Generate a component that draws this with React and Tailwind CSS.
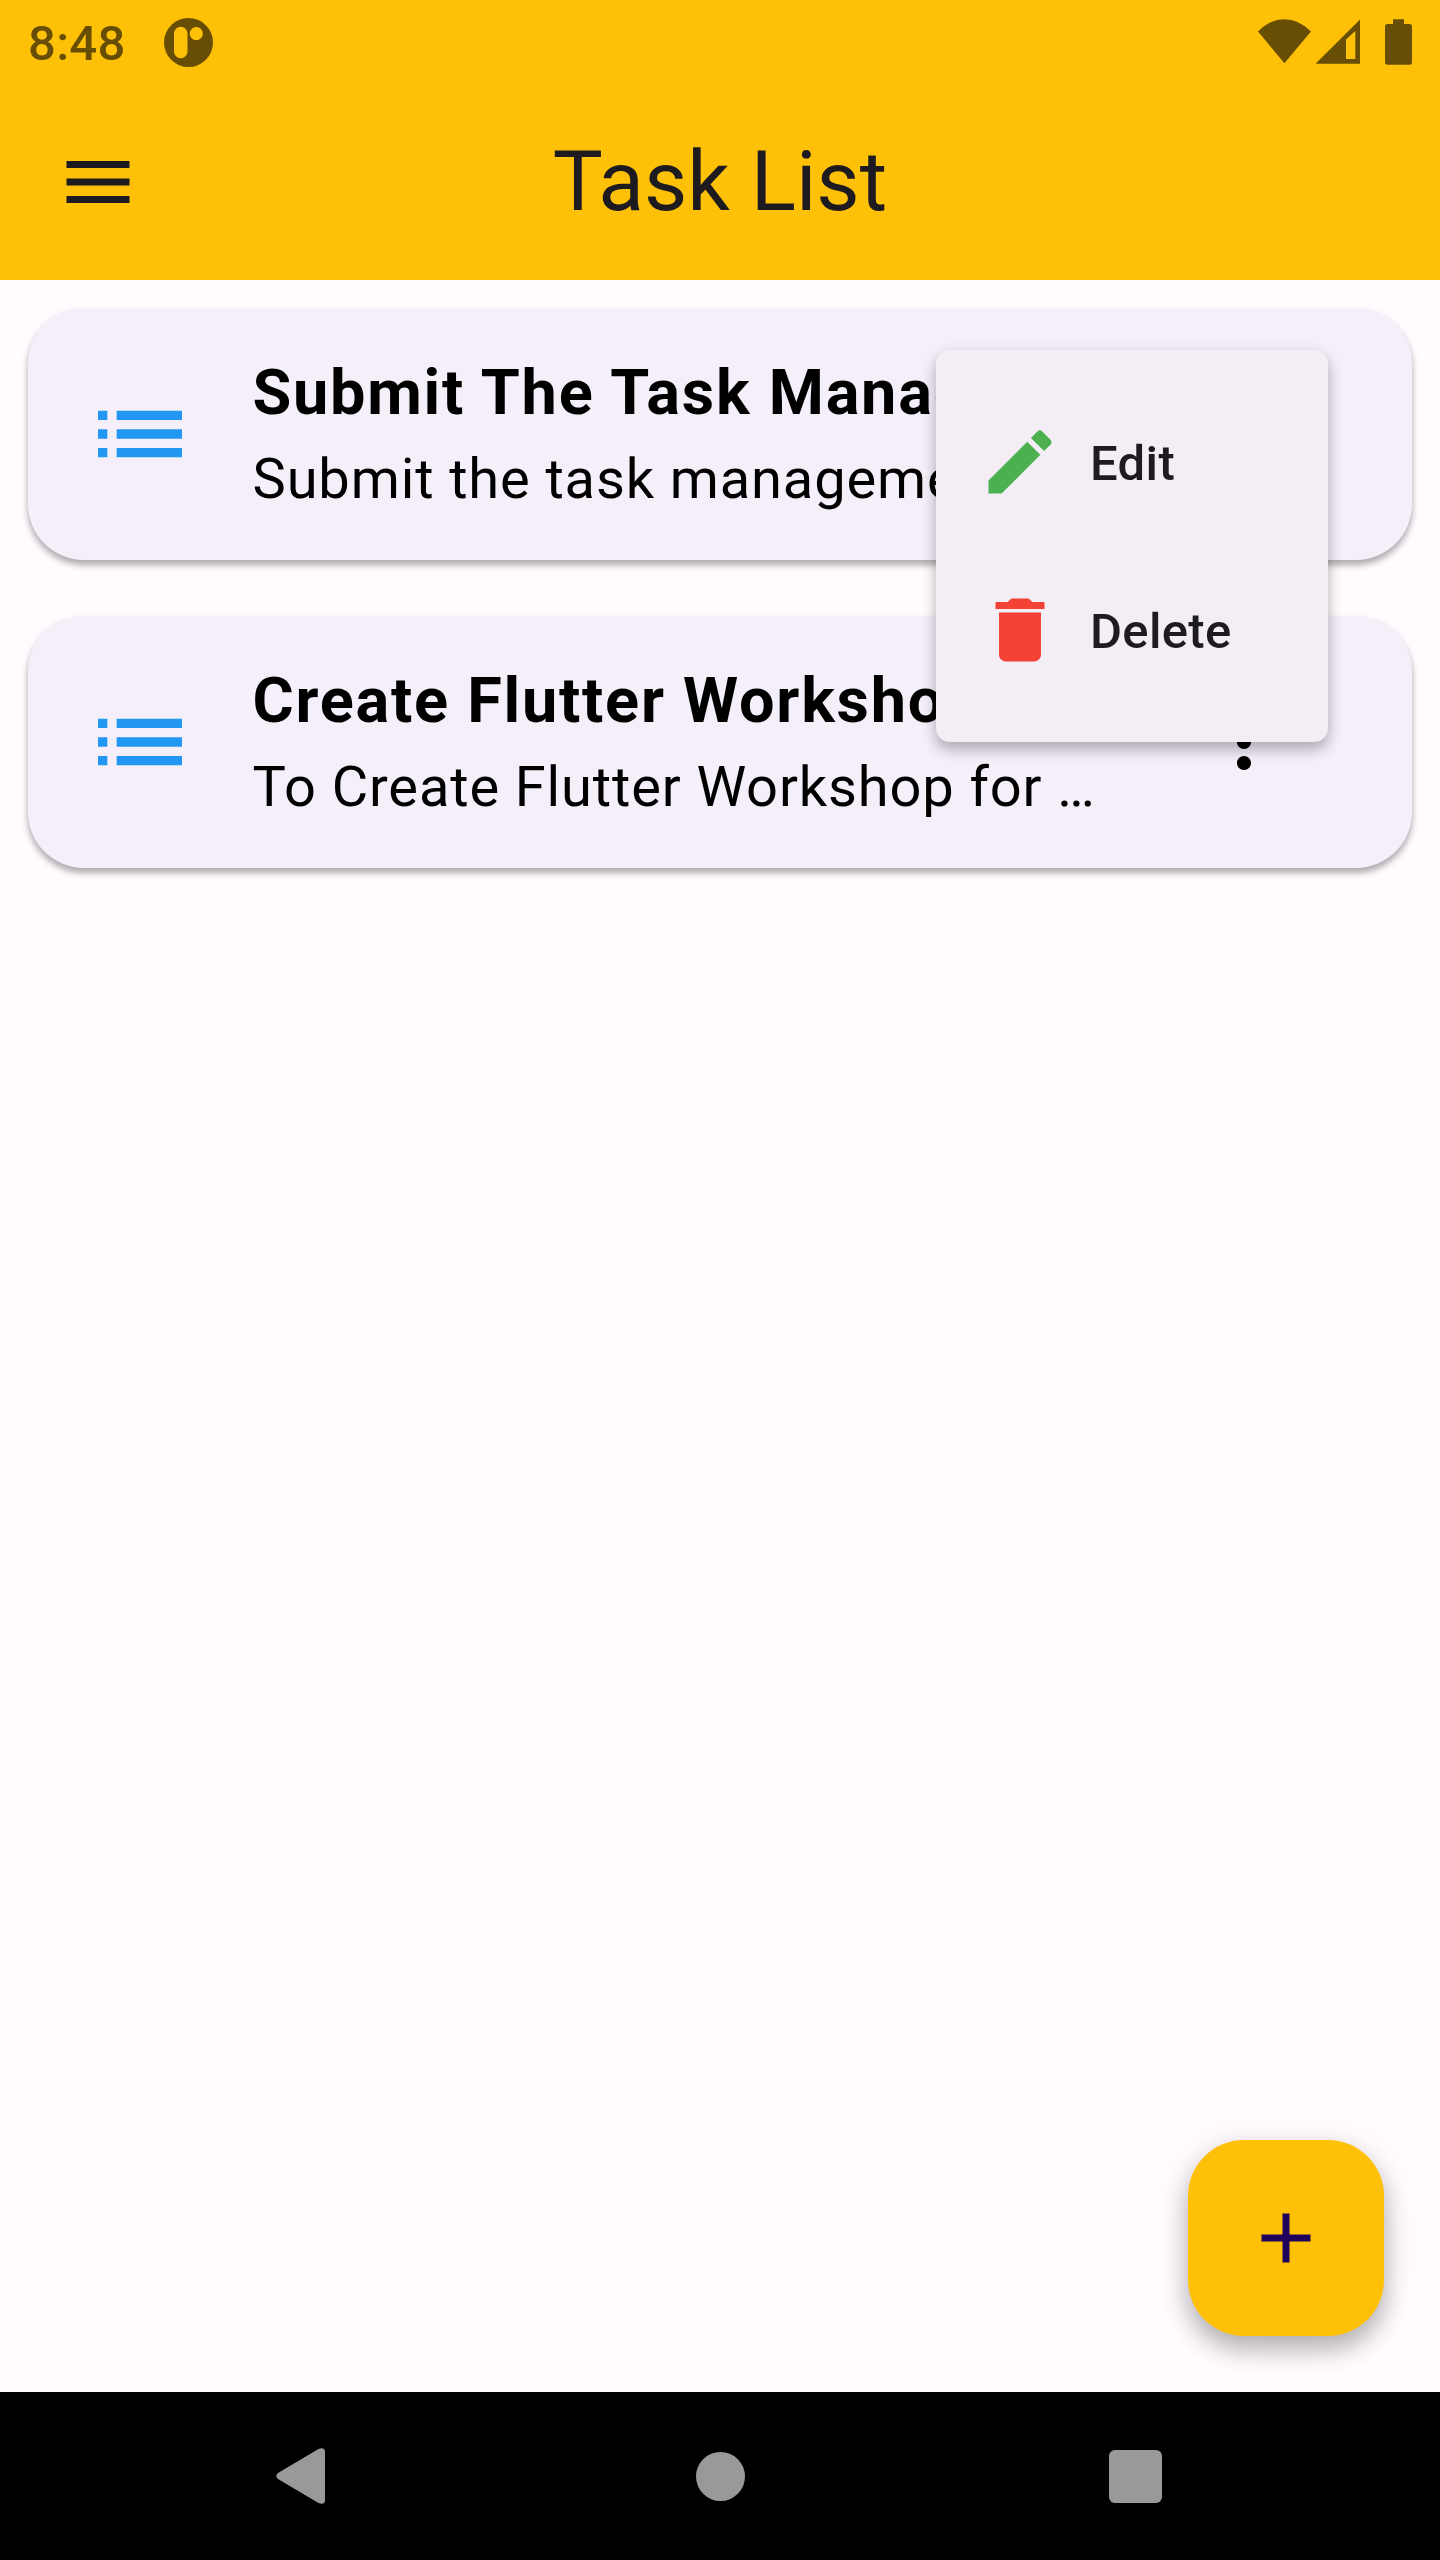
const tasks = [
  { title: 'Submit The Task Management', detail: 'Submit the task management a…' },
  { title: 'Create Flutter Workshop', detail: 'To Create Flutter Workshop for …' },
];

function Icon({ d, className }) {
  return (
    <svg viewBox="0 0 24 24" fill="currentColor" className={className}>
      <path d={d} />
    </svg>
  );
}

const LIST = 'M3 13h2v-2H3v2zm0 4h2v-2H3v2zm0-8h2V7H3v2zm4 4h14v-2H7v2zm0 4h14v-2H7v2zM7 7v2h14V7H7z';
const MENU = 'M3 18h18v-2H3v2zm0-5h18v-2H3v2zm0-7v2h18V6H3z';
const MORE = 'M12 8c1.1 0 2-.9 2-2s-.9-2-2-2-2 .9-2 2 .9 2 2 2zm0 2c-1.1 0-2 .9-2 2s.9 2 2 2 2-.9 2-2-.9-2-2-2zm0 6c-1.1 0-2 .9-2 2s.9 2 2 2 2-.9 2-2-.9-2-2-2z';
const EDIT = 'M3 17.25V21h3.75L17.81 9.94l-3.75-3.75L3 17.25zM20.71 7.04c.39-.39.39-1.02 0-1.41l-2.34-2.34a.9959.9959 0 0 0-1.41 0l-1.83 1.83 3.75 3.75 1.83-1.83z';
const TRASH = 'M6 19c0 1.1.9 2 2 2h8c1.1 0 2-.9 2-2V7H6v12zM19 4h-3.5l-1-1h-5l-1 1H5v2h14V4z';
const PLUS = 'M19 13h-6v6h-2v-6H5v-2h6V5h2v6h6v2z';

function StatusBar() {
  return (
    <div className="flex h-[84px] items-center pl-[28px] text-[#674e04]">
      <span className="mt-[4px] w-[136px] text-[49px] leading-[58px] font-medium tracking-[0.3px]">8:48</span>
      <svg viewBox="0 0 49 49" className="size-[49px]" fill="currentColor">
        <path
          fillRule="evenodd"
          d="M24.500 0a24.500 24.500 0 1 0 0 49a24.500 24.500 0 1 0 0-49zM10 15.500a6.500 6.500 0 0 1 13.500 0v18a6.500 6.500 0 0 1-13.500 0zM32.300 9a6.600 6.600 0 1 1 0 13.200a6.600 6.600 0 1 1 0-13.200z"
        />
      </svg>
      <svg viewBox="0 0 160 48" className="ml-auto mr-[24px] h-[48px] w-[160px]" fill="currentColor">
        <path d="M2 13.400Q14 1.200 28.400 1.200T55 13.400L28.400 45.300z" />
        <path fillRule="evenodd" d="M59.500 45.800L104 1.500v44.300zM90 21.500v19.500h9.300V13z" />
        <path d="M137 1.300h11v4.700h5.500q2.500 0 2.500 2.500v35.700q0 2.500-2.500 2.500h-22q-2.500 0-2.500-2.500V8.500q0-2.500 2.500-2.500h5.500z" />
      </svg>
    </div>
  );
}

function AppBar() {
  return (
    <div className="grid h-[196px] grid-cols-[196px_1fr_196px] items-center text-[#1d1b20]">
      <button className="flex justify-center" aria-label="Open menu">
        <Icon d={MENU} className="size-[84px]" />
      </button>
      <h1 className="mb-[1px] text-center text-[84px] leading-[107px]">Task List</h1>
    </div>
  );
}

function TaskCard({ task }) {
  return (
    <li className="flex h-[252px] items-center rounded-[56px] bg-[#f4eff9] pr-[126px] pl-[56px] text-black shadow-[0_5px_6px_rgba(0,0,0,0.25),0_4px_8px_rgba(0,0,0,0.1)]">
      <Icon d={LIST} className="size-[112px] shrink-0 text-[#2196f3]" />
      <div className="ml-[56.500px] w-[866px] pb-[2px]">
        <p className="text-[63px] leading-[92px] font-bold tracking-[1.75px] whitespace-nowrap">{task.title}</p>
        <p className="text-[56px] leading-[80px] tracking-[0.875px] whitespace-nowrap">{task.detail}</p>
      </div>
      <Icon d={MORE} className="ml-auto size-[84px] shrink-0" />
    </li>
  );
}

function PopupMenu() {
  return (
    <div className="absolute top-[350px] left-[936px] size-[392px] rounded-[14px] bg-[#f3eef5] py-[28px] text-[49px] font-medium tracking-[0.35px] text-[#1d1b20] shadow-[0_9px_14px_rgba(0,0,0,0.2),0_3px_16px_rgba(0,0,0,0.12)]">
      <div className="flex h-[168px] items-center gap-[28px] px-[42px]">
        <Icon d={EDIT} className="size-[84px] text-[#4caf50]" />
        <span className="mt-[3px]">Edit</span>
      </div>
      <div className="flex h-[168px] items-center gap-[28px] px-[42px]">
        <Icon d={TRASH} className="size-[84px] text-[#f44336]" />
        <span className="mt-[3px]">Delete</span>
      </div>
    </div>
  );
}

function NavBar() {
  return (
    <nav className="grid h-[168px] grid-cols-[1fr_49px_1fr] items-center bg-black pr-[278.500px] pl-[276px] text-[#999999]">
      <svg viewBox="0 0 50 58" className="h-[58px] w-[50px]" fill="currentColor">
        <path d="M2 26L42.500 2Q49 -.5 49 5V53Q49 58.500 42.500 56L2 32Q-1.500 29 2 26z" />
      </svg>
      <div className="ml-[1.500px] size-[49px] rounded-full bg-[#999999]" />
      <div className="size-[53px] justify-self-end rounded-[6px] bg-[#999999]" />
    </nav>
  );
}

export default function App() {
  return (
    <div className="relative flex h-[2560px] w-[1440px] flex-col overflow-hidden bg-[#fffbff] font-['Roboto',sans-serif]">
      <header className="bg-[#ffc107]">
        <StatusBar />
        <AppBar />
      </header>
      <main className="flex flex-1 flex-col p-[28px]">
        <ul className="flex flex-col gap-[56px]">
          {tasks.map((task) => (
            <TaskCard key={task.title} task={task} />
          ))}
        </ul>
        <button
          aria-label="Add task"
          className="mt-auto mr-[28px] mb-[28px] flex size-[196px] items-center justify-center self-end rounded-[56px] bg-[#ffc107] text-[#21005d] shadow-[0_14px_24px_rgba(0,0,0,0.24),0_6px_34px_rgba(0,0,0,0.11)]"
        >
          <Icon d={PLUS} className="size-[84px]" />
        </button>
      </main>
      <NavBar />
      <PopupMenu />
    </div>
  );
}
